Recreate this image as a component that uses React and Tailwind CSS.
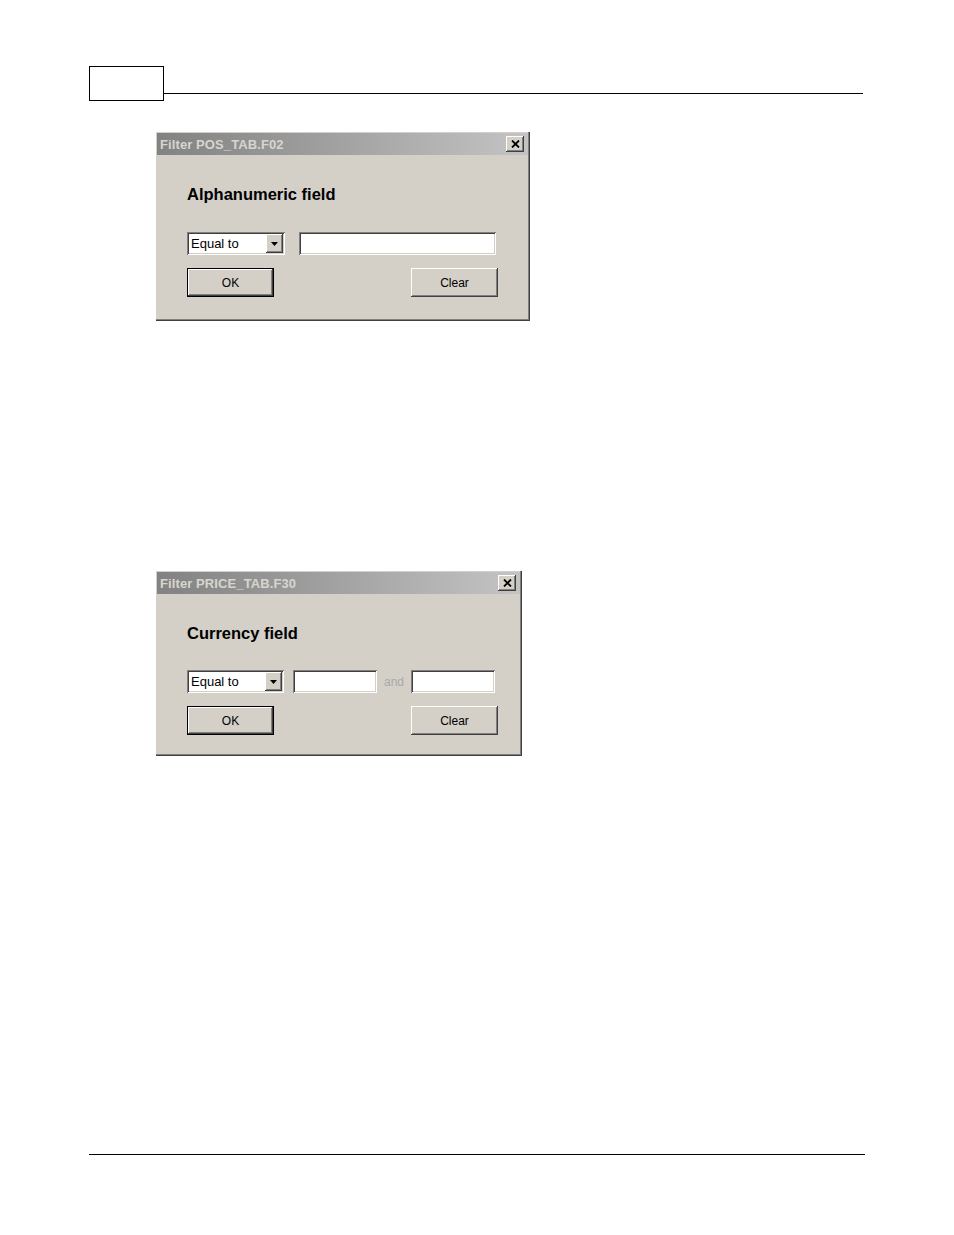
import React from "react";

const raised =
  "shadow-[inset_-1px_-1px_#404040,inset_1px_1px_#ffffff,inset_-2px_-2px_#808080,inset_2px_2px_#d4d0c8]";
const sunken =
  "shadow-[inset_1px_1px_#808080,inset_-1px_-1px_#ffffff,inset_2px_2px_#404040,inset_-2px_-2px_#d4d0c8]";

function TitleBar({ title }) {
  return (
    <div className="flex items-center justify-between h-[22px] pl-[3px] pr-[4px] bg-gradient-to-r from-[#828282] to-[#c4c4c4]">
      <span className="font-['Liberation_Sans',Arial,sans-serif] font-bold text-[13px] leading-none text-[#d8d5ce] tracking-[0.1px]">
        {title}
      </span>
      <div className={`w-[18px] h-[16px] bg-[#d4d0c8] flex items-center justify-center ${raised}`}>
        <svg width="9" height="8" viewBox="0 0 9 8">
          <path d="M1 0.5 L8 7.5 M8 0.5 L1 7.5" stroke="#000" strokeWidth="1.8" />
        </svg>
      </div>
    </div>
  );
}

function Select({ width }) {
  return (
    <div className={`shrink-0 h-[23px] bg-white flex items-center p-[2px] ${sunken}`} style={{ width }}>
      <span className="flex-1 pl-[2px] font-['Liberation_Sans',Arial,sans-serif] text-[13px] leading-none text-black">
        Equal to
      </span>
      <div className={`w-[17px] h-[19px] bg-[#d4d0c8] flex items-center justify-center ${raised}`}>
        <svg width="7" height="4" viewBox="0 0 7 4">
          <path d="M0 0 H7 L3.5 4 Z" fill="#000" />
        </svg>
      </div>
    </div>
  );
}

function Field({ width }) {
  return <div className={`shrink-0 h-[23px] bg-white ${sunken}`} style={{ width }} />;
}

function Button({ label, isDefault }) {
  return (
    <div
      className={`w-[87px] h-[29px] bg-[#d4d0c8] flex items-center justify-center ${
        isDefault ? "border border-black" : ""
      } ${raised}`}
    >
      <span className="font-['Liberation_Sans',Arial,sans-serif] text-[12px] leading-none text-black">
        {label}
      </span>
    </div>
  );
}

function Dialog({ title, heading, width, height, children }) {
  return (
    <div
      className="bg-[#d4d0c8] pt-[1px] pl-[1px] pr-[2px] shadow-[inset_-1px_-1px_#404040,inset_-2px_-2px_#808080]"
      style={{ width, height }}
    >
      <TitleBar title={title} />
      <div className="pl-[30px]">
        <h2 className="mt-[29px] h-[20px] font-['Liberation_Sans',Arial,sans-serif] font-bold text-[16.5px] leading-[20px] text-black">
          {heading}
        </h2>
        {children}
      </div>
    </div>
  );
}

export default function App() {
  return (
    <div className="w-[954px] h-[1235px] bg-white flex flex-col">
      <div className="flex mt-[66px] ml-[89px]">
        <div className="w-[75px] h-[35px] border border-black" />
        <div className="w-[699px] h-[28px] border-b border-black" />
      </div>

      <div className="ml-[156px] mt-[31px]">
        <Dialog title="Filter POS_TAB.F02" heading="Alphanumeric field" width={374} height={189}>
          <div className="mt-[28px] flex items-center gap-[14px]">
            <Select width={98} />
            <Field width={197} />
          </div>
          <div className="mt-[13px] flex justify-between w-[311px]">
            <Button label="OK" isDefault />
            <Button label="Clear" />
          </div>
        </Dialog>
      </div>

      <div className="ml-[156px] mt-[250px]">
        <Dialog title="Filter PRICE_TAB.F30" heading="Currency field" width={366} height={185}>
          <div className="mt-[27px] flex items-center">
            <Select width={97} />
            <div className="ml-[9px] shrink-0">
              <Field width={84} />
            </div>
            <span className="shrink-0 ml-[7px] w-[27px] font-['Liberation_Sans',Arial,sans-serif] text-[12px] leading-none text-[#a8a8a8]">
              and
            </span>
            <Field width={84} />
          </div>
          <div className="mt-[13px] flex justify-between w-[311px]">
            <Button label="OK" isDefault />
            <Button label="Clear" />
          </div>
        </Dialog>
      </div>

      <div className="mt-auto mb-[80px] ml-[89px] w-[776px] border-b border-black" />
    </div>
  );
}
